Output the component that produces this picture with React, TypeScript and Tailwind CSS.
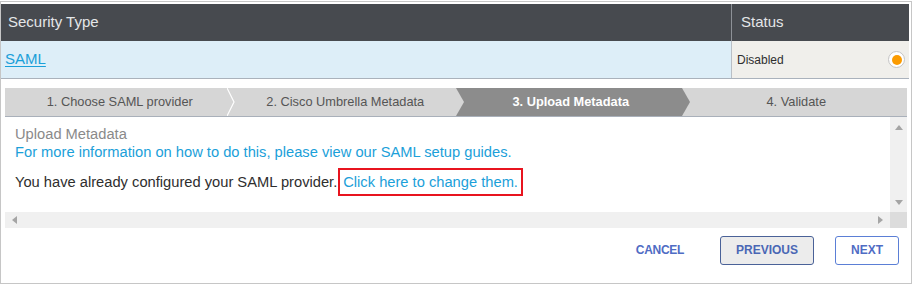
import React from 'react';

const steps = [
  '1. Choose SAML provider',
  '2. Cisco Umbrella Metadata',
  '3. Upload Metadata',
  '4. Validate',
];

const ACTIVE = 2;

// chevron drawn at the right edge of a step, over the next one
function Chevron({ index }: { index: number }) {
  if (index === ACTIVE - 1) {
    // light step pointing into the active one
    return (
      <svg className="absolute top-0 -right-[8px] z-10" width="8" height="28" viewBox="0 0 8 28">
        <polygon points="0,0 8,14 0,28" fill="#d6d6d6" />
      </svg>
    );
  }
  if (index === ACTIVE) {
    return (
      <svg className="absolute top-0 -right-[8px] z-10" width="8" height="28" viewBox="0 0 8 28">
        <polygon points="0,0 8,14 0,28" fill="#8c8c8c" />
      </svg>
    );
  }
  return (
    <svg className="absolute top-0 -right-[4px] z-10" width="8" height="28" viewBox="0 0 8 28">
      <polyline points="0,0 7,14 0,28" fill="none" stroke="#ffffff" strokeWidth="1.2" />
    </svg>
  );
}

export default function App() {
  return (
    <div className="w-[913px] h-[285px] bg-white pt-px font-['Liberation_Sans',Arial,sans-serif]">
      <div className="w-[912px] h-[283px] border border-[#c6c6c6] pt-[2px] pr-[2px] flex flex-col">
        {/* table header */}
        <div className="flex h-[37px] bg-[#474a4f] text-[#e4e6e8] text-[15px]">
          <div className="w-[730px] flex items-center pl-[7px]">Security Type</div>
          <div className="flex-1 flex items-center pl-[9px] border-l border-[#8d9197]">Status</div>
        </div>

        {/* table row */}
        <div className="flex h-[38px] border-b border-[#aab2bc]">
          <div className="w-[730px] flex items-center pl-[4px] bg-[#ddeef8]">
            <a className="text-[15px] text-[#1aa0d9] underline underline-offset-2">SAML</a>
          </div>
          <div className="flex-1 flex items-center justify-between pl-[5px] pr-[4px] bg-[#f0efeb] border-l border-[#b9bfc6]">
            <span className="text-[12px] text-[#2e2e2e]">Disabled</span>
            <span className="w-[17px] h-[17px] rounded-full bg-white border border-[#c4c4c4] flex items-center justify-center">
              <span className="w-[10px] h-[10px] rounded-full bg-[#fb9b00]" />
            </span>
          </div>
        </div>

        {/* wizard */}
        <div className="flex flex-col pl-[4px] pt-[9px]">
          <div className="flex h-[29px] border-b border-[#a9b0ba] w-[902px]">
            {steps.map((s, i) => (
              <div
                key={s}
                className={`relative flex-1 flex items-center justify-center text-[12.8px] ${
                  i === ACTIVE ? 'bg-[#8c8c8c] text-white font-bold' : 'bg-[#d6d6d6] text-[#555555]'
                }`}
              >
                <span className="pl-[4px]">{s}</span>
                {i < steps.length - 1 && <Chevron index={i} />}
              </div>
            ))}
          </div>

          {/* scrollable content */}
          <div className="flex w-[902px]">
            <div className="flex-1 h-[95px] pl-[10px] pt-[8px]">
              <div className="text-[14.7px] text-[#8a8a8a] font-light leading-[18px]">Upload Metadata</div>
              <div className="text-[14.7px] text-[#1ba0d9] leading-[18px]">
                For more information on how to do this, please view our SAML setup guides.
              </div>
              <div className="mt-[7px] flex items-center text-[14.7px] text-[#2e2e2e] leading-[18px]">
                <span>You have already configured your SAML provider.</span>
                <span className="ml-[1px] px-[3px] py-[3px] border-2 border-[#e8141f] text-[#1ba0d9]">
                  Click here to change them.
                </span>
              </div>
            </div>
            <div className="w-[17px] h-[95px] bg-[#f0f0f0] flex flex-col items-center justify-between pt-[8px] pb-[7px]">
              <svg width="8" height="5" viewBox="0 0 8 5"><polygon points="0,5 4,0 8,5" fill="#a5a5a5" /></svg>
              <svg width="8" height="5" viewBox="0 0 8 5"><polygon points="0,0 8,0 4,5" fill="#a5a5a5" /></svg>
            </div>
          </div>
          <div className="flex w-[902px] h-[16px]">
            <div className="flex-1 bg-[#f0f0f0] flex items-center justify-between px-[7px]">
              <svg width="5" height="8" viewBox="0 0 5 8"><polygon points="5,0 0,4 5,8" fill="#a5a5a5" /></svg>
              <svg width="5" height="8" viewBox="0 0 5 8"><polygon points="0,0 5,4 0,8" fill="#a5a5a5" /></svg>
            </div>
            <div className="w-[17px] bg-[#dcdcdc]" />
          </div>

          {/* footer buttons */}
          <div className="flex items-center justify-end h-[41px] pr-[10px] pt-[3px] text-[12px] font-bold">
            <button className="mr-[36px] text-[#4f6cc4] tracking-tight">CANCEL</button>
            <button className="w-[94px] h-[29px] mr-[21px] bg-[#ececec] border border-[#4a6298] rounded-[3px] text-[#4a67b5]">
              PREVIOUS
            </button>
            <button className="w-[64px] h-[29px] bg-white border border-[#5b7fd6] rounded-[3px] text-[#4f6cc4]">
              NEXT
            </button>
          </div>
        </div>
      </div>
    </div>
  );
}
